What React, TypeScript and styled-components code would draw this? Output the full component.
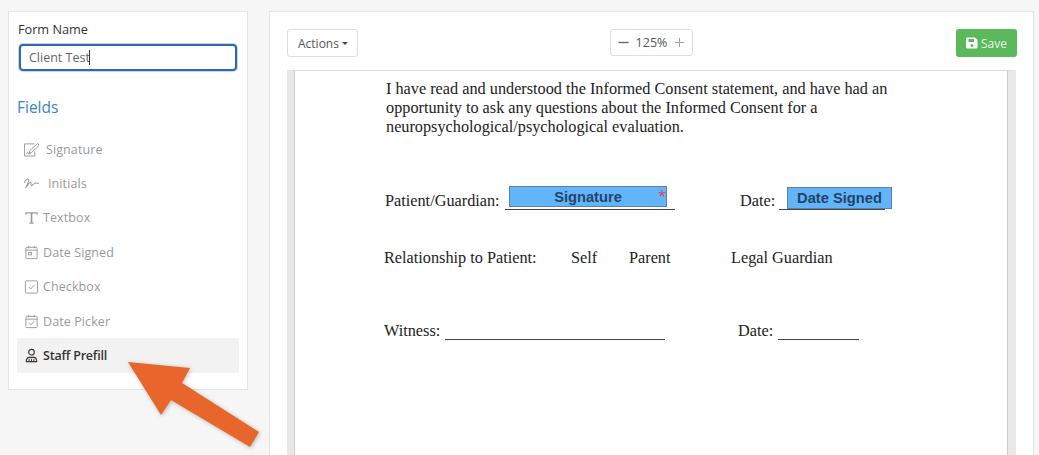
import * as React from 'react'
import styled, { createGlobalStyle } from 'styled-components'

const GlobalStyle = createGlobalStyle`
    html, body {
        margin: 0;
        padding: 0;
        height: 100%;
        background: #f6f6f6;
        overflow: hidden;
    }
    * { box-sizing: border-box; }
`

const icons: { [key: string]: React.ReactNode } = {
    signature: (
        <>
            <path d="M12 3H1.500v13h11V11" />
            <path d="M7 10.500L15.500 2.500l2 2-8.500 7.500-2.800.8z" />
            <path d="M3.500 14c1-2 1.500-2 2-1s1.500.8 3 .3" />
        </>
    ),
    initials: <path d="M1 8.500C2.500 5 5 3.500 6 4.500S4 11 2.500 14c1.500-1.500 4.500-6.500 5.500-6.500s0 4 1 4 2.500-3 4-3 2 .6 4.500 0" strokeWidth="1.100" />,
    textbox: (
        <>
            <path d="M3 6V4h12v2" strokeWidth="1.300" />
            <path d="M9 4v11" strokeWidth="1.800" />
            <path d="M6.500 15h5" strokeWidth="1.200" />
        </>
    ),
    dateSigned: (
        <>
            <rect x="3" y="3.500" width="12" height="12" rx="1" />
            <path d="M3 6.500h12M6 2v2.500M12 2v2.500" />
            <rect x="6" y="9" width="3" height="2.500" />
        </>
    ),
    checkbox: (
        <>
            <rect x="2.500" y="3" width="13" height="13" rx="1" />
            <path d="M6 9.500l2.200 2.200L12.500 7" />
        </>
    ),
    datePicker: (
        <>
            <rect x="3" y="3.500" width="12" height="12" rx="1" />
            <path d="M3 6.500h12M6 2v2.500M12 2v2.500" />
            <path d="M6.500 10.500l2 2L12 8.500" />
        </>
    ),
    staff: (
        <>
            <circle cx="9" cy="5.500" r="3" strokeWidth="1.200" />
            <path d="M3.500 15.500c0-3 1.200-4.500 3-4.500h5c1.800 0 3 1.500 3 4.500z" strokeWidth="1.200" />
            <path d="M6.500 12.500v3M9 12.500v3M11.500 12.500v3" />
        </>
    ),
}

const fields = [
    { name: 'Signature', icon: 'signature', gap: 7 },
    { name: 'Initials', icon: 'initials', gap: 9 },
    { name: 'Textbox', icon: 'textbox', gap: 4 },
    { name: 'Date Signed', icon: 'dateSigned', gap: 4 },
    { name: 'Checkbox', icon: 'checkbox', gap: 4 },
    { name: 'Date Picker', icon: 'datePicker', gap: 4 },
    { name: 'Staff Prefill', icon: 'staff', gap: 4, active: true },
]

export default function App() {
    return (
        <Page>
            <GlobalStyle />
            <Sidebar>
                <FormLabel>Form Name</FormLabel>
                <NameInput>
                    Client Test<Caret />
                </NameInput>
                <FieldsTitle>Fields</FieldsTitle>
                <FieldList>
                    {fields.map(f => (
                        <FieldItem key={f.name} $active={f.active} $gap={f.gap}>
                            <FieldIcon viewBox="1 1 16 16">{icons[f.icon]}</FieldIcon>
                            {f.name}
                        </FieldItem>
                    ))}
                </FieldList>
            </Sidebar>
            <Main>
                <Toolbar>
                    <ActionsButton>
                        Actions <DropCaret />
                    </ActionsButton>
                    <ZoomGroup>
                        <ZoomIcon viewBox="0 0 12 12" $strong>
                            <path d="M0.500 6h11" />
                        </ZoomIcon>
                        125%
                        <ZoomIcon viewBox="0 0 12 12">
                            <path d="M1 6h10M6 1v10" />
                        </ZoomIcon>
                    </ZoomGroup>
                    <SaveButton>
                        <svg width="12" height="12" viewBox="0 0 12 12">
                            <path
                                fill="#fff"
                                fillRule="evenodd"
                                d="M1.500 0.500h7.500l2.500 2.500v7c0 .8-.6 1.500-1.500 1.500h-8.500c-.8 0-1.500-.7-1.500-1.500v-8c0-.8.7-1.500 1.500-1.500zM2.500 2v3h5.500v-3zM6 7a1.500 1.500 0 1 0 0 3 1.500 1.500 0 0 0 0-3z"
                            />
                        </svg>
                        Save
                    </SaveButton>
                </Toolbar>
                <DocFrame>
                    <DocPage>
                        <Paragraph>
                            I have read and understood the Informed Consent statement, and have had an
                            <br />
                            opportunity to ask any questions about the Informed Consent for a
                            <br />
                            neuropsychological/psychological evaluation.
                        </Paragraph>
                        <DocRow $top={55}>
                            <Cell $w={120}>Patient/Guardian:</Cell>
                            <Blank $w={170}>
                                <PlacedField $left={4} $top={-23} $w={158} $h={21}>
                                    Signature
                                    <Required>*</Required>
                                </PlacedField>
                            </Blank>
                            <Cell $w={65} $left={65}>Date:</Cell>
                            <Blank $w={106} $left={-26}>
                                <PlacedField $left={8} $top={-22} $w={105} $h={22}>
                                    Date Signed
                                </PlacedField>
                            </Blank>
                        </DocRow>
                        <DocRow $top={38}>
                            <Cell $w={187} $left={-1}>Relationship to Patient:</Cell>
                            <Cell $w={58}>Self</Cell>
                            <Cell $w={102}>Parent</Cell>
                            <Cell>Legal Guardian</Cell>
                        </DocRow>
                        <DocRow $top={54}>
                            <Cell $w={61} $left={-1}>Witness:</Cell>
                            <Blank $w={220} />
                            <Cell $w={40} $left={73}>Date:</Cell>
                            <Blank $w={81} />
                        </DocRow>
                    </DocPage>
                </DocFrame>
            </Main>
            <Arrow viewBox="0 0 270 100" width="270" height="100">
                <polygon
                    points="128,5 190,11 182,26 259,75 250,90 171,43 161,58"
                    fill="#e8652b"
                />
            </Arrow>
        </Page>
    )
}

const Page = styled('div')`
    display: flex;
    align-items: flex-start;
    gap: 21px;
    height: 455px;
    padding: 11px 5px 0 8px;
    overflow: hidden;
    position: relative;
    font-family: "Open Sans", sans-serif;
    font-size: 13px;
    color: #333;
`

const Sidebar = styled('aside')`
    flex: 0 0 240px;
    height: 379px;
    padding: 8px 9px;
    background: #fff;
    border: 1px solid #e4e4e4;
`

const FormLabel = styled('div')`
    font-size: 12.700px;
    font-weight: 500;
    line-height: 18px;
    color: #333;
`

const NameInput = styled('div')`
    display: flex;
    align-items: center;
    height: 27px;
    margin: 6px 1px 0;
    padding: 0 8px;
    border: 2px solid #2f66ad;
    border-radius: 4px;
    box-shadow: 0 0 0 1px #c6d8ee;
    font-size: 12.500px;
    color: #666;
`

const Caret = styled('span')`
    width: 1px;
    height: 15px;
    margin-left: -1px;
    background: #333;
`

const FieldsTitle = styled('h4')`
    margin: 26px 0 0 -1px;
    font-size: 15.500px;
    font-weight: 500;
    line-height: 20px;
    color: #3a86c2;
`

const FieldList = styled('div')`
    display: flex;
    flex-direction: column;
    margin: 15px -1px 0;
`

const FieldItem = styled('div')<{ $active?: boolean; $gap: number }>`
    display: flex;
    align-items: center;
    gap: ${p => p.$gap}px;
    height: 34.400px;
    padding-left: 7px;
    background: ${p => (p.$active ? '#f2f2f2' : 'transparent')};
    color: ${p => (p.$active ? '#333' : '#999')};
    font-weight: ${p => (p.$active ? 600 : 400)};
    font-size: 12.500px;
    letter-spacing: ${p => (p.$active ? '-0.2px' : '0.1px')};
`

const FieldIcon = styled('svg')`
    width: 15px;
    height: 15px;
    flex: none;
    fill: none;
    stroke: currentColor;
    stroke-width: 1;
`

const Main = styled('main')`
    flex: 1;
    height: 460px;
    padding: 17px 17px 0;
    background: #fff;
    border: 1px solid #e4e4e4;
`

const Toolbar = styled('div')`
    display: flex;
    align-items: flex-start;
    justify-content: space-between;
    height: 41px;
    margin-right: -1px;
`

const ActionsButton = styled('button')`
    display: flex;
    align-items: center;
    gap: 3px;
    width: 71px;
    height: 28px;
    padding: 0 0 0 10px;
    background: #fff;
    border: 1px solid #ddd;
    border-radius: 3px;
    font: 400 12px "Open Sans", sans-serif;
    color: #555;
`

const DropCaret = styled('span')`
    width: 0;
    height: 0;
    border-top: 3px solid #444;
    border-left: 3px solid transparent;
    border-right: 3px solid transparent;
`

const ZoomGroup = styled('div')`
    display: flex;
    align-items: center;
    justify-content: center;
    gap: 7px;
    width: 83px;
    height: 27px;
    margin-right: 11px;
    border: 1px solid #ddd;
    border-radius: 3px;
    font-size: 12.500px;
    color: #555;
`

const ZoomIcon = styled('svg')<{ $strong?: boolean }>`
    width: 11px;
    height: 11px;
    fill: none;
    stroke: ${p => (p.$strong ? '#666' : '#999')};
    stroke-width: ${p => (p.$strong ? 1.500 : 1)};
`

const SaveButton = styled('button')`
    display: flex;
    align-items: center;
    justify-content: center;
    gap: 3px;
    width: 61px;
    height: 28px;
    padding: 0;
    background: #5cb85c;
    border: none;
    border-radius: 3px;
    font: 400 12px "Open Sans", sans-serif;
    color: #e9f6e9;
`

const DocFrame = styled('div')`
    height: 400px;
    border-top: 1px solid #ddd;
    border-left: 7px solid #e8e8e8;
    border-right: 8px solid #e8e8e8;
`

const DocPage = styled('div')`
    height: 100%;
    padding: 9px 0 0 91px;
    background: #fff;
    border-left: 1px solid #ccc;
    border-right: 1px solid #ccc;
    font-family: "Liberation Serif", serif;
    font-size: 16.260px;
    line-height: 19px;
    color: #222;
`

const Paragraph = styled('p')`
    margin: 0;
    white-space: nowrap;
`

const DocRow = styled('div')<{ $top: number }>`
    display: flex;
    align-items: flex-end;
    margin-top: ${p => p.$top}px;
    margin-left: -1px;
    white-space: nowrap;
`

const Cell = styled('span')<{ $w?: number; $left?: number }>`
    flex: none;
    width: ${p => (p.$w ? `${p.$w}px` : 'auto')};
    margin-left: ${p => p.$left || 0}px;
`

const Blank = styled('span')<{ $w: number; $left?: number }>`
    position: relative;
    flex: none;
    width: ${p => p.$w}px;
    height: 1px;
    margin-bottom: 1px;
    margin-left: ${p => p.$left || 0}px;
    background: #444;
`

const PlacedField = styled('span')<{ $left: number; $top: number; $w: number; $h: number }>`
    position: absolute;
    left: ${p => p.$left}px;
    top: ${p => p.$top}px;
    width: ${p => p.$w}px;
    height: ${p => p.$h}px;
    background: #62b5f8;
    border: 1px solid #5d80a3;
    font: 700 14.700px/20px "Liberation Sans", sans-serif;
    text-align: center;
    color: #24436a;
`

const Required = styled('span')`
    position: absolute;
    top: 0;
    right: 0;
    font: 400 19px/19px "Liberation Sans", sans-serif;
    color: #e0455f;
`

const Arrow = styled('svg')`
    position: absolute;
    left: 0;
    top: 357px;
    filter: drop-shadow(1px 1px 2px rgba(0, 0, 0, 0.25));
`
